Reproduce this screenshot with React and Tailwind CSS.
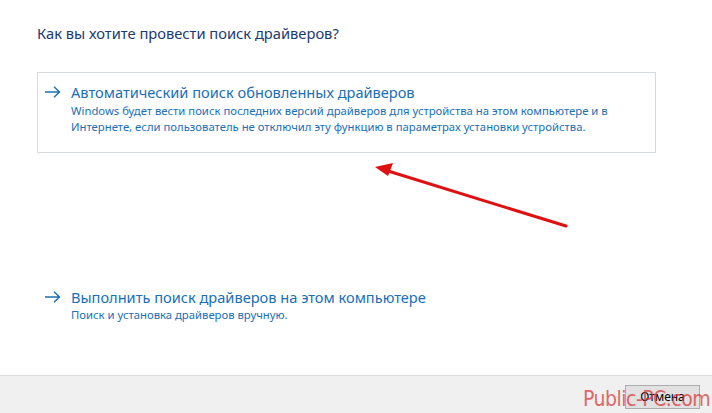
import React from "react";

function Arrow() {
  return (
    <svg width="17" height="12" viewBox="0 0 17 12" className="shrink-0">
      <path d="M1 6 H15.5 M10 0.8 L15.5 6 L10 11.2" fill="none" stroke="#1a6fb5" strokeWidth="1.4" />
    </svg>
  );
}

export default function App() {
  const font = { fontFamily: '"Noto Sans", "Open Sans", sans-serif' };
  return (
    <div className="relative w-[712px] h-[413px] bg-white flex flex-col overflow-hidden" style={font}>
      <div className="flex-1 flex flex-col pl-[37px] pr-[56px]">
        <div className="mt-[23px] text-[14.7px] leading-[20px] text-[#1c3a70]">
          Как вы хотите провести поиск драйверов?
        </div>
        <div className="mt-[29px] h-[81px] border border-[#d5dadf] pl-[6px] pt-[9px] flex flex-col">
          <div className="flex items-center gap-[10px]">
            <Arrow />
            <span className="text-[14.6px] leading-[20px] text-[#1a6fb5]">Автоматический поиск обновленных драйверов</span>
          </div>
          <div className="pl-[27px] mt-[1px] text-[11.3px] leading-[16px] text-[#1a6fb5]">
            Windows будет вести поиск последних версий драйверов для устройства на этом компьютере и в
            <br />
            Интернете, если пользователь не отключил эту функцию в параметрах установки устройства.
          </div>
        </div>
        <div className="mt-[134px] pl-[7px] flex flex-col">
          <div className="flex items-center gap-[10px]">
            <Arrow />
            <span className="text-[14.6px] leading-[20px] text-[#1a6fb5]">Выполнить поиск драйверов на этом компьютере</span>
          </div>
          <div className="pl-[27px] mt-[0px] text-[11.3px] leading-[16px] text-[#1a6fb5]">
            Поиск и установка драйверов вручную.
          </div>
        </div>
      </div>
      <div className="h-[38px] border-t border-[#dcdcdc] bg-[#f0f0f0] flex items-start justify-end pr-[12px] pt-[9px]">
        <button className="w-[75px] h-[24px] bg-[#e1e1e1] border border-[#adadad] text-[12px] leading-[20px] text-black" style={{ fontFamily: '"Noto Sans", sans-serif' }}>
          Отмена
        </button>
      </div>
      <svg className="absolute left-0 top-0 pointer-events-none" width="712" height="413">
        <line x1="566" y1="226" x2="388" y2="171" stroke="#e01010" strokeWidth="3" strokeLinecap="round" />
        <polygon points="375,167 393,163 388,176" fill="#e01010" />
      </svg>
      <div
        className="absolute left-[583px] top-[387px] whitespace-nowrap text-[21px] leading-[24px] text-[#d43a3a] opacity-75 pointer-events-none font-['DejaVu_Sans_Condensed',sans-serif] tracking-[-0.5px]"
      >
        Public-PC.com
      </div>
    </div>
  );
}
